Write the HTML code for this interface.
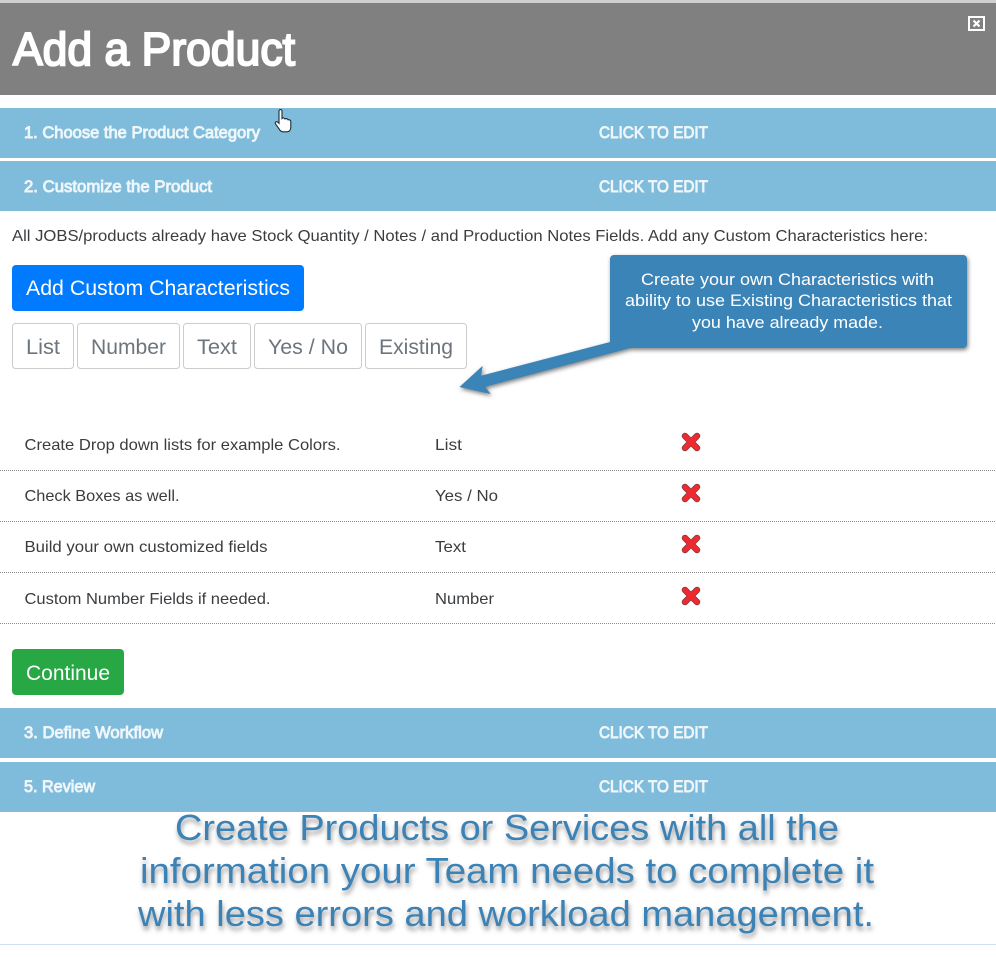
<!DOCTYPE html>
<html><head><meta charset="utf-8"><title>Add a Product</title>
<style>
html,body{margin:0;padding:0;background:#fff;width:996px;height:957px;overflow:hidden}
svg{display:block;position:absolute;left:0;top:0}
text{font-family:"Liberation Sans",sans-serif}
.t{font-size:16px;fill:#3a3d40}
.h{font-size:16.5px;fill:#eef6fa;stroke:#eef6fa;stroke-width:.9px}
.b{font-size:21px;fill:#fff}
.g{font-size:21.5px;fill:#6c757d}
.c{font-size:16.5px;fill:#fff}
.s{font-size:36.5px;fill:#3b82b6;filter:drop-shadow(1px 4px 2.5px rgba(60,60,60,.5))}
</style></head><body>
<svg width="996" height="957" viewBox="0 0 996 957" xmlns="http://www.w3.org/2000/svg">
<rect width="996" height="957" fill="#fff"/>
<rect width="996" height="3" fill="#cfcfcf"/>
<rect y="3" width="996" height="92" fill="#808080"/>
<text x="13" y="65" font-size="46.5" fill="#fff" stroke="#fff" stroke-width="2" textLength="282" lengthAdjust="spacingAndGlyphs">Add a Product</text>
<rect x="969" y="17" width="15" height="13" fill="none" stroke="#fff" stroke-width="2"/>
<path d="M973.5 20.500l6 6M979.5 20.500l-6 6" stroke="#fff" stroke-width="2.200"/>

<rect y="108" width="996" height="50" fill="#7fbcdb"/>
<rect y="161" width="996" height="50" fill="#7fbcdb"/>
<rect y="708" width="996" height="50" fill="#7fbcdb"/>
<rect y="762" width="996" height="50" fill="#7fbcdb"/>
<text class="h" x="24" y="138" textLength="236" lengthAdjust="spacingAndGlyphs">1. Choose the Product Category</text>
<text class="h" x="24" y="192" textLength="188" lengthAdjust="spacingAndGlyphs">2. Customize the Product</text>
<text class="h" x="24" y="738" textLength="139" lengthAdjust="spacingAndGlyphs">3. Define Workflow</text>
<text class="h" x="24" y="792" textLength="71" lengthAdjust="spacingAndGlyphs">5. Review</text>
<text class="h" x="599" y="138" textLength="109" lengthAdjust="spacingAndGlyphs">CLICK TO EDIT</text>
<text class="h" x="599" y="192" textLength="109" lengthAdjust="spacingAndGlyphs">CLICK TO EDIT</text>
<text class="h" x="599" y="738" textLength="109" lengthAdjust="spacingAndGlyphs">CLICK TO EDIT</text>
<text class="h" x="599" y="792" textLength="109" lengthAdjust="spacingAndGlyphs">CLICK TO EDIT</text>

<path d="M279 110.500c1-1.500 3-1 3 .5v7.500c1-1 2.500-.5 3 .5 1-.8 2.500-.3 3 .8 1.500-.5 2.800.5 2.800 2v5c0 3-1.500 5-3.800 5h-4c-2 0-3-1-4-3l-3.500-5c-1-1.500 1-3 2.500-1.500l1 1z" fill="#fff" stroke="#1d2a35" stroke-width="1.100"/>

<text class="t" x="12" y="241" textLength="916" lengthAdjust="spacingAndGlyphs">All JOBS/products already have Stock Quantity / Notes / and Production Notes Fields. Add any Custom Characteristics here:</text>

<rect x="12" y="265" width="292" height="46" rx="4" fill="#007bff"/>
<text class="b" x="26" y="295" textLength="264" lengthAdjust="spacingAndGlyphs">Add Custom Characteristics</text>

<g fill="#fff" stroke="#ccc" stroke-width="1">
<rect x="12.500" y="323.500" width="61" height="45" rx="3"/>
<rect x="77.500" y="323.500" width="102" height="45" rx="3"/>
<rect x="183.500" y="323.500" width="67" height="45" rx="3"/>
<rect x="254.500" y="323.500" width="107" height="45" rx="3"/>
<rect x="365.500" y="323.500" width="101" height="45" rx="3"/>
</g>
<text class="g" x="26" y="354" textLength="34" lengthAdjust="spacingAndGlyphs">List</text>
<text class="g" x="91" y="354" textLength="75" lengthAdjust="spacingAndGlyphs">Number</text>
<text class="g" x="197" y="354" textLength="40" lengthAdjust="spacingAndGlyphs">Text</text>
<text class="g" x="268" y="354" textLength="80" lengthAdjust="spacingAndGlyphs">Yes / No</text>
<text class="g" x="379" y="354" textLength="74" lengthAdjust="spacingAndGlyphs">Existing</text>

<g style="filter:drop-shadow(1px 2px 2px rgba(40,40,40,.6))">
<polygon points="459.500,387 482.700,365.700 481,375.700 612,341.500 630,348 485,386.700 490.700,394" fill="#3b84b8"/>
<rect x="610" y="255" width="357" height="93" rx="4" fill="#3b84b8"/>
</g>
<text class="c" x="641" y="285" textLength="293" lengthAdjust="spacingAndGlyphs">Create your own Characteristics with</text>
<text class="c" x="625" y="306" textLength="327" lengthAdjust="spacingAndGlyphs">ability to use Existing Characteristics that</text>
<text class="c" x="692" y="328" textLength="191" lengthAdjust="spacingAndGlyphs">you have already made.</text>

<text class="t" x="24.500" y="450" textLength="316" lengthAdjust="spacingAndGlyphs">Create Drop down lists for example Colors.</text>
<text class="t" x="24.500" y="501" textLength="155" lengthAdjust="spacingAndGlyphs">Check Boxes as well.</text>
<text class="t" x="24.500" y="552" textLength="243" lengthAdjust="spacingAndGlyphs">Build your own customized fields</text>
<text class="t" x="24.500" y="604" textLength="246" lengthAdjust="spacingAndGlyphs">Custom Number Fields if needed.</text>
<text class="t" x="435" y="450" textLength="27" lengthAdjust="spacingAndGlyphs">List</text>
<text class="t" x="435" y="501" textLength="63" lengthAdjust="spacingAndGlyphs">Yes / No</text>
<text class="t" x="435" y="552" textLength="31" lengthAdjust="spacingAndGlyphs">Text</text>
<text class="t" x="435" y="604" textLength="59" lengthAdjust="spacingAndGlyphs">Number</text>
<g stroke="#8a8a8a" stroke-width="1" stroke-dasharray="1 1">
<path d="M0 470.500H996M0 521.500H996M0 572.500H996M0 623.500H996"/>
</g>
<defs><g id="x"><path d="M-6-6L6 6M6-6L-6 6" stroke="#7a3a3c" stroke-width="6.500" stroke-linecap="round"/><path d="M-6-6L6 6M6-6L-6 6" stroke="#ee2a30" stroke-width="5" stroke-linecap="round"/></g></defs>
<use href="#x" x="691" y="442"/>
<use href="#x" x="691" y="493"/>
<use href="#x" x="691" y="544"/>
<use href="#x" x="691" y="596"/>

<rect x="12" y="649" width="112" height="46" rx="4" fill="#28a745"/>
<text class="b" x="26" y="680" textLength="84" lengthAdjust="spacingAndGlyphs">Continue</text>

<text class="s" x="175" y="840" textLength="664" lengthAdjust="spacingAndGlyphs">Create Products or Services with all the</text>
<text class="s" x="140" y="883" textLength="734" lengthAdjust="spacingAndGlyphs">information your Team needs to complete it</text>
<text class="s" x="138" y="926" textLength="736" lengthAdjust="spacingAndGlyphs">with less errors and workload management.</text>
<rect y="944" width="996" height="1" fill="#cfe0f0"/>
</svg>
</body></html>
